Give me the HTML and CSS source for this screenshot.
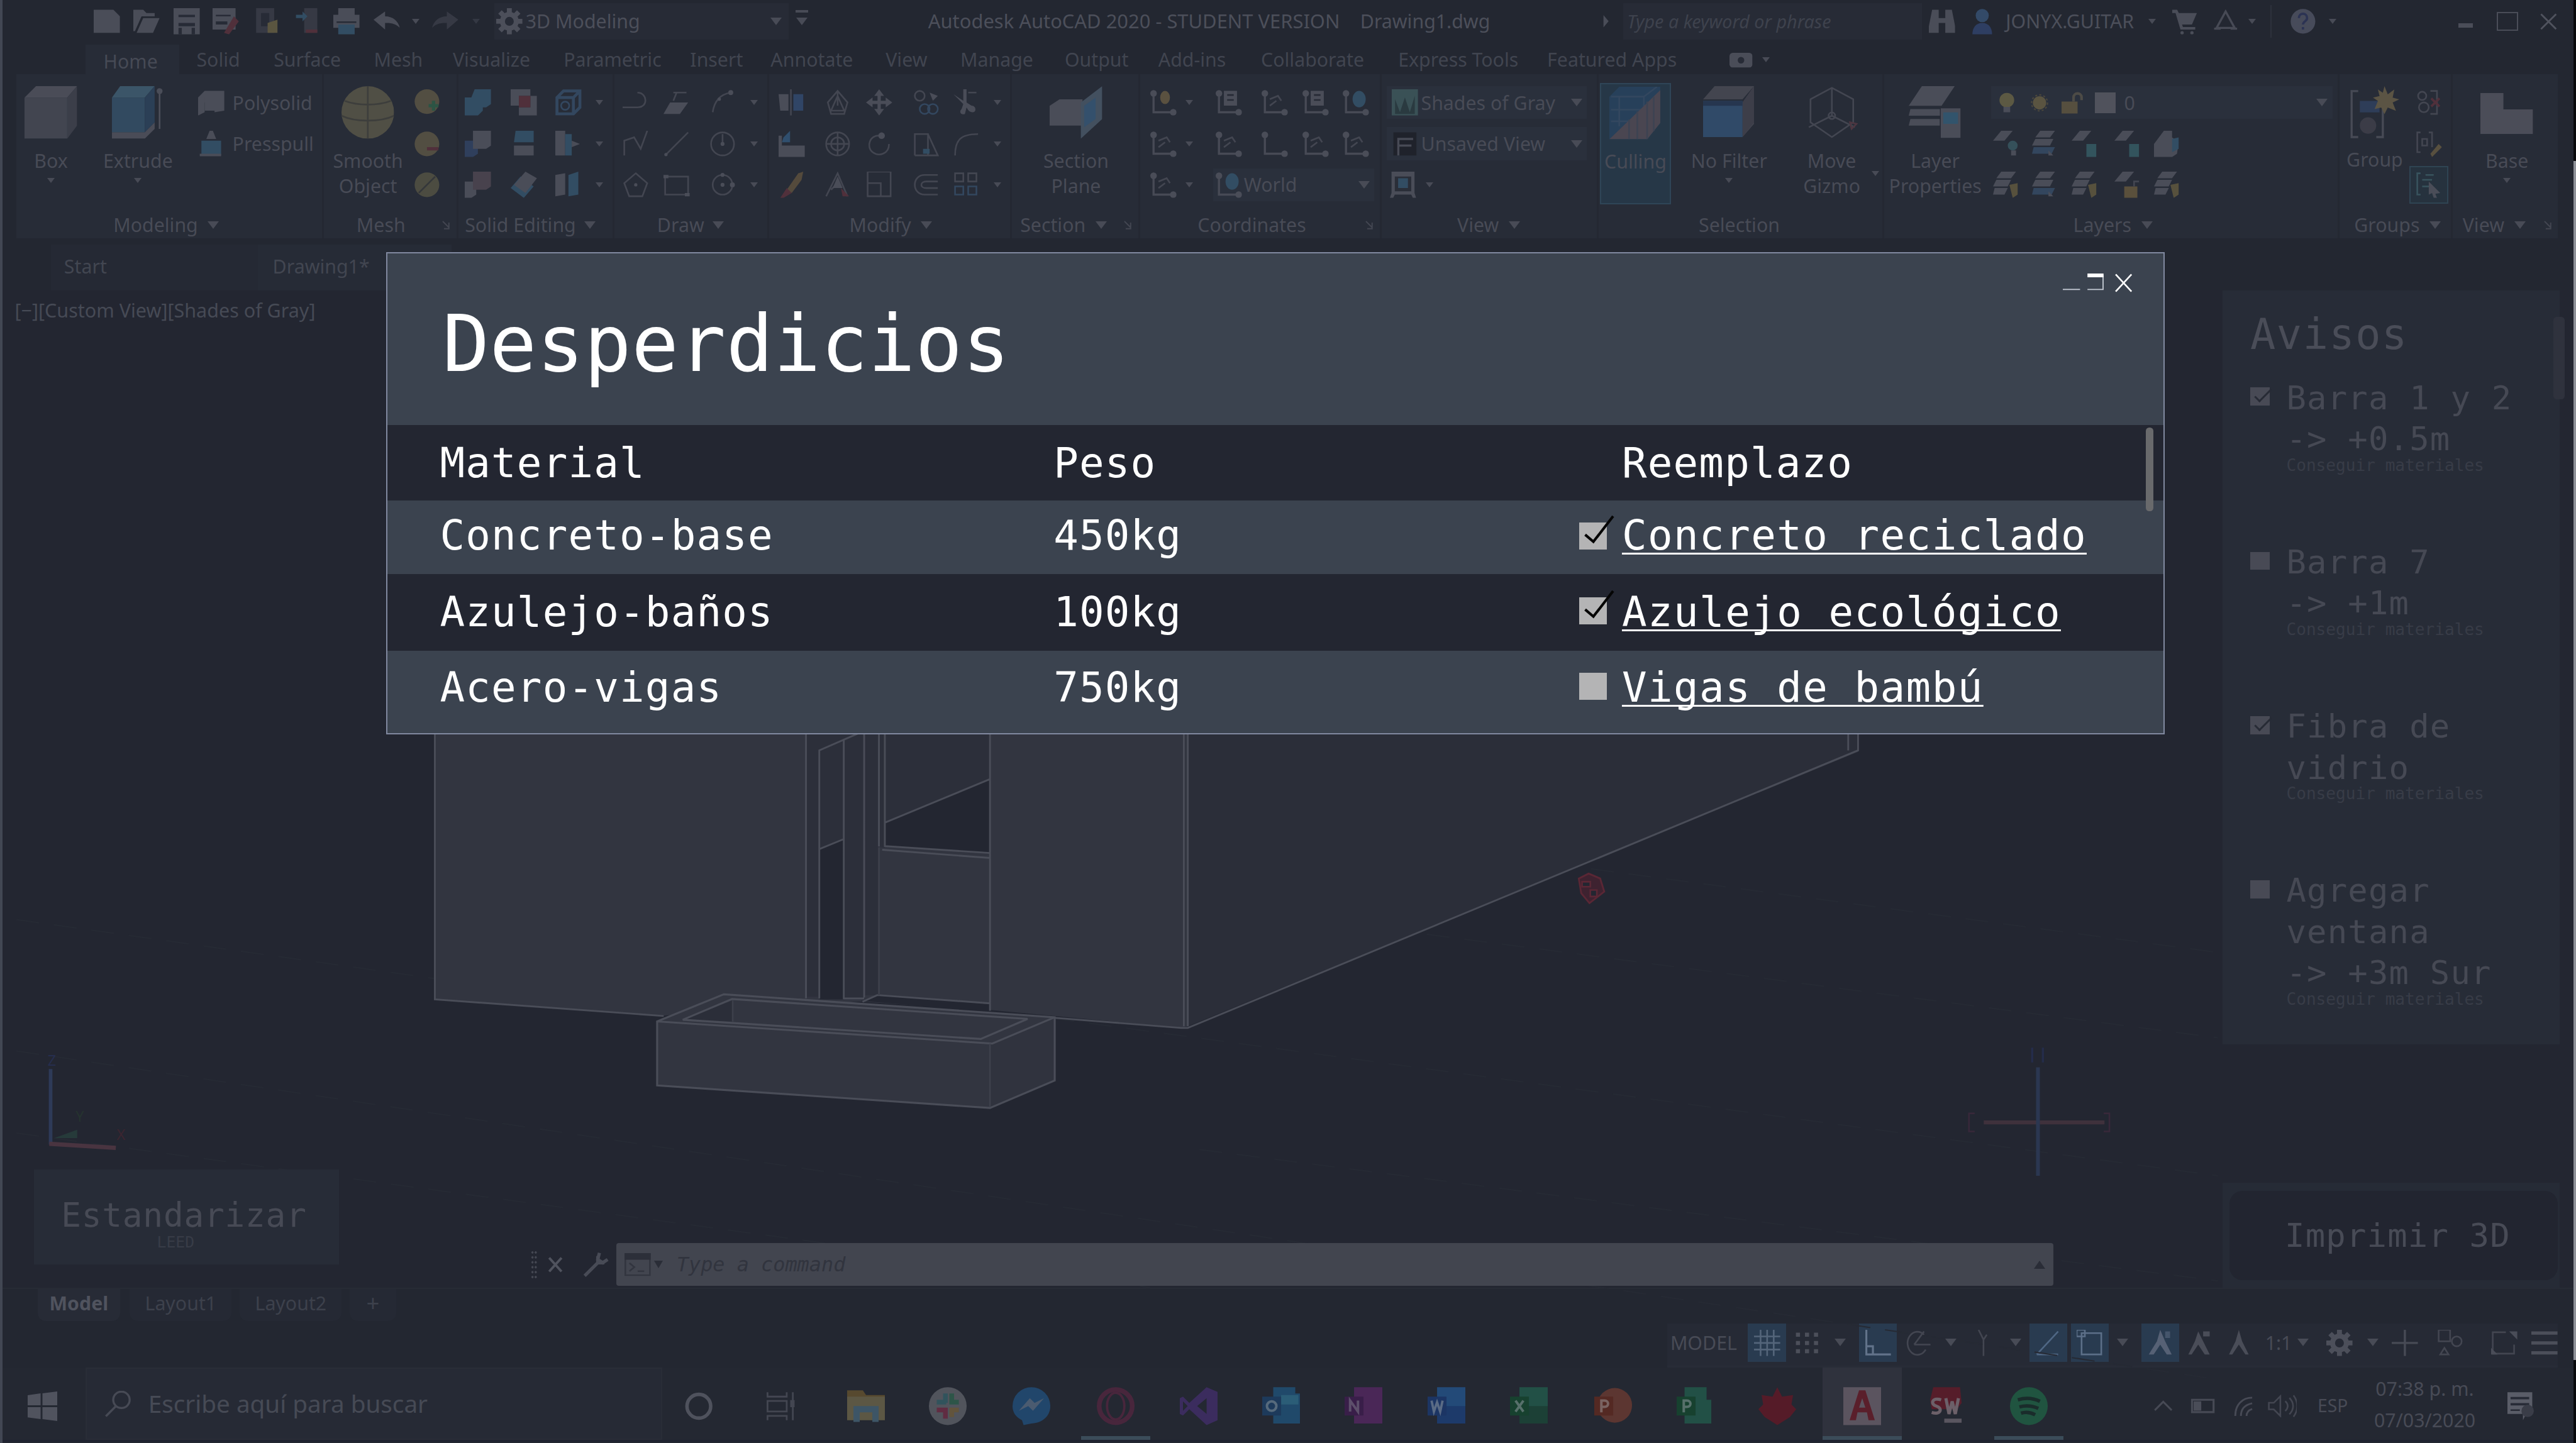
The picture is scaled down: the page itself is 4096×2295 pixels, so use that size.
FILE: index.html
```html
<!DOCTYPE html>
<html lang="es">
<head>
<meta charset="utf-8">
<title>Desperdicios</title>
<link rel="stylesheet" href="styles.css">
</head>
<body>
<svg class="sprite" aria-hidden="true">
  <symbol id="new" viewBox="0 0 16 16"><path class="g" d="M0 1h12l4 4v10H0z"/></symbol>
  <symbol id="open" viewBox="0 0 16 16"><path class="g" d="M0 1h6l2 2h5v2H5L1 14H0zM6 6h10l-4 9H2z"/></symbol>
  <symbol id="save" viewBox="0 0 16 16"><path class="g" d="M0 0h16v16H0z"/><path class="k" d="M3 4h10v1.500H3zM3 9h10v2H3zM3 12h2v4H3zM11 12h2v4h-2z"/></symbol>
  <symbol id="saveas" viewBox="0 0 16 16"><path class="g" d="M0 0h14v13H0z"/><path class="k" d="M2 4h9v1H2zM2 8h7v2H2z"/><path class="r" d="M13 5l3 3-6 8-3-1z"/></symbol>
  <symbol id="webopen" viewBox="0 0 16 16"><path class="d" d="M2 0h11v15H2z"/><path class="k" d="M5 3h5v8H5z"/><path class="y" d="M9 9l6-2v8H9z"/></symbol>
  <symbol id="websave" viewBox="0 0 16 16"><path class="d" d="M6 0h8v15H6z"/><path class="b" d="M1 4h4V2l3 3-3 3V6H1z"/><path class="r" d="M7 13h7v2H7z"/></symbol>
  <symbol id="print" viewBox="0 0 16 16"><path class="g" d="M3 0h10v4h3v8H0V4h3z"/><path class="k" d="M2 8h12v1H2z"/><path class="b" d="M3 10h10v6H3z"/></symbol>
  <symbol id="undo" viewBox="0 0 16 16"><path class="g" d="M0 7l7-5v3c5 0 8 3 9 7-3-3-6-3-9-3v4z"/></symbol>
  <symbol id="redo" viewBox="0 0 16 16"><path class="d" d="M16 7L9 2v3C4 5 1 8 0 12c3-3 6-3 9-3v4z"/></symbol>
  <symbol id="gear" viewBox="0 0 16 16"><circle cx="8" cy="8" r="4.200" fill="none" stroke="#4c4f5a" stroke-width="3"/><path stroke="#4c4f5a" stroke-width="3" d="M8 0v3M8 13v3M0 8h3M13 8h3M2.300 2.300l2 2M11.700 11.700l2 2M2.300 13.700l2-2M11.700 4.300l2-2"/></symbol>
  <symbol id="binoc" viewBox="0 0 16 16"><path class="g" d="M2 1h4v5h4V1h4l2 10v4h-6V9H6v6H0v-4z"/></symbol>
  <symbol id="user" viewBox="0 0 16 16"><circle cx="8" cy="4.500" r="4" fill="#334a68"/><path d="M2 16c0-4 2-7 6-7s6 3 6 7z" fill="#2e3e62"/></symbol>
  <symbol id="cart" viewBox="0 0 16 16"><path class="g" d="M0 1h3l1 2h11l-3 7H6l.500 1.500H14V13H5L2 3H0z"/><circle class="g" cx="6" cy="15" r="1"/><circle class="g" cx="12" cy="15" r="1"/></symbol>
  <symbol id="atri" viewBox="0 0 16 16"><path class="ln2" d="M8 2l5.500 10h-11zM1 12.500h4M11 12.500h4"/></symbol>
  <symbol id="help" viewBox="0 0 16 16"><circle cx="8" cy="8" r="7.500" fill="#474b5a"/><path d="M5.500 6c0-3.500 5-3.500 5 0 0 2-2.500 2-2.500 4M8 11.500v1.500" fill="none" stroke="#2c3353" stroke-width="1.400"/></symbol>
  <symbol id="box" viewBox="0 0 32 32"><path fill="#424550" d="M0 7h26v25H0z"/><path fill="#4a4c57" d="M0 7l7-7h25l-6 7z"/><path fill="#3b3e49" d="M26 7l6-7v24l-6 8z"/></symbol>
  <symbol id="extrude" viewBox="0 0 32 32"><path fill="#4a4c57" d="M0 28h20l6-6v4l-6 6H0z"/><path fill="#324a60" d="M0 7h20v21H0z"/><path fill="#3b5568" d="M0 7l5-7h21l-6 7z"/><path fill="#2b3f56" d="M20 7l6-7v22l-6 6z"/><path stroke="#4c4f5a" d="M29 3v23" /><circle class="g" cx="29" cy="3" r="1.800"/></symbol>
  <symbol id="polysolid" viewBox="0 0 16 16"><path class="g" d="M0 5l4-4h12v12l-6 1V6L4 8v6l-4 2z"/><path class="g" d="M4 5h10v8H4z"/></symbol>
  <symbol id="presspull" viewBox="0 0 16 16"><path class="b" d="M2 6h12v9H2z"/><path class="g" d="M7 0h2l2 5H5zM1 14h13v1.500H1z"/></symbol>
  <symbol id="sphere" viewBox="0 0 32 32"><circle cx="16" cy="16" r="16" fill="#504f45"/><path fill="none" stroke="#3d3e3c" d="M16 0v32M0 18c8 4 24 4 32 0M2 9c8 3 20 3 28 0"/></symbol>
  <symbol id="sphm" viewBox="0 0 16 16"><circle cx="8" cy="7.500" r="7.500" fill="#524e42"/><path class="gr" d="M9 9h6v2h-6zM11 7h2v6h-2z"/></symbol>
  <symbol id="sphl" viewBox="0 0 16 16"><circle cx="8" cy="8" r="7.500" fill="#524e42"/><path class="r" d="M8 10h7v2H8z"/></symbol>
  <symbol id="sphs" viewBox="0 0 16 16"><circle cx="8" cy="8" r="7.500" fill="#4c4c41"/><path stroke="#34373a" d="M3 13L13 3"/></symbol>
  <symbol id="union" viewBox="0 0 16 16"><path class="b" d="M0 5h4l2-5h10v9l-3 2h-2v2l-3 3H0z"/></symbol>
  <symbol id="subtract" viewBox="0 0 16 16"><path class="g" d="M0 0h12v4H5v6H0zM5 11h7V4h4v12H5z"/><path class="r" d="M5 4h7v7H5z"/></symbol>
  <symbol id="wirebox" viewBox="0 0 16 16"><path class="lb wide" d="M1 5l4-4h10v10l-4 4H1zM1 5h10v10M11 5l4-4"/><circle class="lb" cx="6" cy="10" r="2.500"/></symbol>
  <symbol id="slab" viewBox="0 0 16 16"><path fill="#2f3f5c" d="M0 6h8v8l-3 2H0z"/><path class="g" d="M5 0h11v9l-3 2H5z"/></symbol>
  <symbol id="slice" viewBox="0 0 16 16"><path class="b" d="M3 0h11v7H2z"/><path class="g" d="M2 9h12v6H2z"/></symbol>
  <symbol id="thicken" viewBox="0 0 16 16"><path class="g" d="M0 0h6v15H0z"/><path class="b" d="M6 2h4v13H6z"/><path class="g" d="M10 6l5 2-5 2z"/></symbol>
  <symbol id="inter" viewBox="0 0 16 16"><path class="g" d="M0 6h7v8l-3 2H0z"/><path fill="#48424d" d="M5 0h11v9l-3 2H5z"/></symbol>
  <symbol id="fillet" viewBox="0 0 16 16"><path class="b" d="M0 10l6-7 8 6-6 7z"/><path class="g" d="M2 8l7-8 7 4-7 9z"/></symbol>
  <symbol id="shell" viewBox="0 0 16 16"><path class="g" d="M0 2l6-1v13l-6 1z"/><path class="b" d="M8 2l6-2v14l-6 1z"/></symbol>
  <symbol id="pline" viewBox="0 0 16 16"><path class="ln" d="M0 11h9c7 0 6-9 0-9M0 11h3"/></symbol>
  <symbol id="plane" viewBox="0 0 16 16"><path class="g" d="M4 8h11l-5 7H0z"/><path class="ln" d="M6 2h8M8 2L6 7"/></symbol>
  <symbol id="arc" viewBox="0 0 16 16"><path class="ln" d="M2 14C3 7 7 3 13 2"/><circle class="g" cx="13" cy="2" r="1.500"/><circle class="g" cx="6" cy="6" r="1"/></symbol>
  <symbol id="zig" viewBox="0 0 16 16"><path class="ln" d="M1 15V6l6-2 4 7 4-11"/></symbol>
  <symbol id="line" viewBox="0 0 16 16"><path class="ln" d="M1 15L15 1"/><circle class="g" cx="1.500" cy="14.500" r="1"/></symbol>
  <symbol id="circle" viewBox="0 0 16 16"><circle class="ln" cx="8" cy="8" r="7"/><path class="ln" d="M8 8V2"/><circle class="g" cx="8" cy="8" r="1.200"/></symbol>
  <symbol id="penta" viewBox="0 0 16 16"><path class="ln" d="M8 1l7 6-3 8H4L1 7z"/><circle class="g" cx="8" cy="8" r="1"/></symbol>
  <symbol id="rect" viewBox="0 0 16 16"><path class="ln" d="M1 3h14v11H1z"/><path class="g" d="M0 2h3v2H0zM13 13h3v2h-3z"/></symbol>
  <symbol id="helix" viewBox="0 0 16 16"><circle class="ln" cx="8" cy="8" r="6"/><circle class="g" cx="8" cy="8" r="1.200"/><circle class="g" cx="14" cy="8" r="1.500"/><circle class="g" cx="8" cy="2" r="1.200"/></symbol>
  <symbol id="mirror" viewBox="0 0 16 16"><path class="g" d="M0 3h6v10H1z"/><path fill="#304566" d="M9 3h6v10H9z"/><path class="ln" d="M7.500 0v16"/></symbol>
  <symbol id="rot3" viewBox="0 0 16 16"><path class="ln" d="M8 1l6 7-2 7H4L2 8zM8 4l4 9H4zM8 1v9"/></symbol>
  <symbol id="move" viewBox="0 0 16 16"><path class="g" d="M8 0l3 4H9v3h3V5l4 3-4 3V9H9v3h2l-3 4-3-4h2V9H4v2L0 8l4-3v2h3V4H5z"/></symbol>
  <symbol id="copy" viewBox="0 0 16 16"><circle class="ln" cx="4" cy="4" r="3"/><path class="g" d="M10 2l5 2-3 3z"/><circle class="lb" cx="7" cy="12" r="3"/><circle class="lb" cx="12" cy="12" r="3"/></symbol>
  <symbol id="trim" viewBox="0 0 16 16"><path class="g" d="M0 3l6 4V0h2v8l3 2c3 0 3 4 1 4s-3-1-4-3l-1 4c-2 1-4-1-2-3l1-3z"/><path class="ln" d="M9 2h5"/></symbol>
  <symbol id="align" viewBox="0 0 16 16"><path class="g" d="M0 3h2v6h14v7H0z"/><path fill="#304f6e" d="M3 4l4-4v7H2z"/></symbol>
  <symbol id="rot" viewBox="0 0 16 16"><circle class="ln" cx="8" cy="8" r="7"/><circle class="ln" cx="8" cy="8" r="4"/><path class="ln" d="M8 1v14M1 8h14"/></symbol>
  <symbol id="rotate" viewBox="0 0 16 16"><path class="ln" d="M9 3C2 2 0 10 4 13s10 1 10-5"/><circle class="g" cx="9.500" cy="3" r="2"/></symbol>
  <symbol id="stretch" viewBox="0 0 16 16"><path class="ln" d="M1 15V2h8v13M9 2l6 13H1"/><path class="b" d="M6 11h4v3H6z"/></symbol>
  <symbol id="filletc" viewBox="0 0 16 16"><path class="ln" d="M1 15C1 6 4 2 15 2"/></symbol>
  <symbol id="erase" viewBox="0 0 16 16"><path fill="#544a3c" d="M12 1l3-1-1 5-6 8-3-2z"/><path class="r" d="M5 10l3 3-5 3H1z"/></symbol>
  <symbol id="scale3" viewBox="0 0 16 16"><path class="ln" d="M1 15L8 1l6 14M4 11l4-4"/><path class="r" d="M10 10l5 5h-4z"/><path class="g" d="M8 3l3 7H5z"/></symbol>
  <symbol id="scale" viewBox="0 0 16 16"><path class="ln" d="M1 0v15h14V0zM1 7h8v8"/></symbol>
  <symbol id="offset" viewBox="0 0 16 16"><path class="ln" d="M15 2H7C-1 2-1 14 7 14h8M15 6H8c-4 0-4 4 0 4h7"/></symbol>
  <symbol id="array" viewBox="0 0 16 16"><path class="ln" d="M1 1h5v5H1zM9 1h5v5H9z"/><path class="lb" d="M1 9h5v5H1zM9 9h5v5H9z"/></symbol>
  <symbol id="section" viewBox="0 0 32 32"><path class="g" d="M0 12l6-4h14v16H0z"/><path fill="#43505f" d="M19 10L32 0v20L19 32z"/><path fill="#34506c" d="M21 12l7-5v13l-7 5z"/></symbol>
  <symbol id="ucs" viewBox="0 0 16 16"><path class="ln2" d="M2 3v11h11"/><circle class="g" cx="2" cy="2.500" r="2"/><circle class="g" cx="14" cy="14" r="2"/></symbol>
  <symbol id="ucs1" viewBox="0 0 16 16"><path class="ln2" d="M2 3v11h11"/><circle class="g" cx="2" cy="2.500" r="2"/><circle class="g" cx="14" cy="14" r="2"/><ellipse cx="9" cy="5" rx="3" ry="4" fill="#5a5140"/></symbol>
  <symbol id="ucs2" viewBox="0 0 16 16"><path class="ln2" d="M2 3v11h11"/><circle class="g" cx="2" cy="2.500" r="2"/><circle class="g" cx="14" cy="14" r="2"/><path class="g" d="M5 1h8v9H5z"/><path class="k" d="M7 3h4v1H7zM7 6h4v1H7z"/></symbol>
  <symbol id="ucs3" viewBox="0 0 16 16"><path class="ln2" d="M2 3v11h11"/><circle class="g" cx="2" cy="2.500" r="2"/><circle class="g" cx="14" cy="14" r="2"/><ellipse class="b" cx="10" cy="6" rx="4" ry="5"/></symbol>
  <symbol id="ucs4" viewBox="0 0 16 16"><path class="ln2" d="M2 3v11h11"/><path class="ln" d="M5 6l5-2 2 3M5 10l4-3"/><circle class="g" cx="2" cy="2.500" r="2"/><circle class="g" cx="14" cy="14" r="2"/></symbol>
  <symbol id="vs" viewBox="0 0 16 16"><path fill="#3a5156" d="M0 0h16v16H0z"/><path fill="#2a3a40" d="M2 6l3 8 3-9 3 9 3-10v11H2z"/></symbol>
  <symbol id="uv" viewBox="0 0 16 16"><path fill="#1f222b" d="M1 1h14v14H1z"/><path class="ln2" d="M4 15V5h9M4 9h8"/></symbol>
  <symbol id="vp" viewBox="0 0 16 16"><path class="g" d="M1 0h14v13l1 3h-2l-1-2H3l-1 2H0l1-3z"/><path fill="#2a2e38" d="M3 3h10v9H3z"/><path class="b" d="M5 4h6v6H5z"/></symbol>
  <symbol id="culling" viewBox="0 0 32 32"><path fill="#27405a" d="M0 6l6-6h25v22l-8 10H0z"/><path class="lb" d="M1 6h20v24M21 6l8-6M6 6v18M1 14h20M1 21h12"/><path fill="#4a4651" d="M0 32L31 2v20l-8 10z"/><path stroke="#3d4352" fill="none" d="M12 20v12M17 15v17M23 9v23M27 6v21"/></symbol>
  <symbol id="nofilter" viewBox="0 0 32 32"><path fill="#43454f" d="M0 8l7-8h24l-7 10v21l7-8V0l-7 8z"/><path fill="#3d3e49" d="M24 10l7-10v22l-7 9z"/><path fill="#304a68" d="M0 9h24v22H0z"/><path fill="#26364f" d="M0 9h24v3H0z"/></symbol>
  <symbol id="gizmo" viewBox="0 0 32 32"><path class="ln" d="M16 1v17M3 8v14l13 9 13-9V8L16 1zM16 18L2 25M16 18l14 7"/><circle class="ln" cx="16" cy="18" r="2"/><path stroke="#4d3640" fill="none" d="M27 22l4 1-3 3z"/></symbol>
  <symbol id="layers" viewBox="0 0 32 32"><path class="g" d="M8 0h20L20 12H0zM1 14h26l-3 4H0zM1 20h18v4H0z"/><path class="k" d="M19 13h13v19H19z"/><path class="g" d="M19.500 13.500h12v18h-12z"/><path fill="#32546c" d="M21 16h9v7h-9z"/></symbol>
  <symbol id="bulb" viewBox="0 0 16 16"><circle cx="8" cy="6" r="5.500" fill="#5c5943"/><path class="g" d="M5.500 11h5v4h-5z"/></symbol>
  <symbol id="sun" viewBox="0 0 16 16"><circle cx="8" cy="8" r="5" fill="#5a5441"/><circle cx="8" cy="8" r="6" fill="none" stroke="#4b473d" stroke-dasharray="1.500 1.600"/></symbol>
  <symbol id="lock" viewBox="0 0 16 16"><path fill="#564f3f" d="M0 7h12v9H0z"/><path fill="none" stroke="#4d4b46" stroke-width="2" d="M9 7V4c0-4 6-4 6 0v2"/></symbol>
  <symbol id="lay1" viewBox="0 0 16 16"><path class="g" d="M5 0h7L7 6H0z"/><circle cx="12" cy="9" r="3" fill="#35505a"/><path class="g" d="M11 12h3v3h-3z"/></symbol>
  <symbol id="lay2" viewBox="0 0 16 16"><path class="g" d="M5 0h9l-3 4H2zM2 5h11l-2 4H0z"/><path fill="#33465e" d="M1 10h13l-2 4H0z"/><path class="g" d="M10 12l3 3h-3z"/></symbol>
  <symbol id="lay3" viewBox="0 0 16 16"><path class="g" d="M5 0h7L7 6H0z"/><path fill="#33545d" d="M9 8h6v8H9z"/></symbol>
  <symbol id="lay4" viewBox="0 0 16 16"><path class="g" d="M6 0h5v4l4 3-1 7-3 2H0V8z"/><path class="b" d="M11 5l4-1v7l-4 2z"/></symbol>
  <symbol id="lay5" viewBox="0 0 16 16"><path class="g" d="M5 0h9l-3 4H2zM2 5h9l-2 4H0zM1 10h8l-2 4H0z"/><path fill="#57513d" d="M10 8l5-1v7l-3 2z"/></symbol>
  <symbol id="lay6" viewBox="0 0 16 16"><path class="g" d="M5 0h7L7 6H0z"/><path fill="#5a503c" d="M6 9h8v7H6z"/><path class="ln" d="M12 9V6h3"/></symbol>
  <symbol id="group" viewBox="0 0 32 32"><path class="ln2" d="M6 3H2v28h4M17 31h4V14"/><path fill="#2e3d58" d="M7 9h12v7H7z"/><circle cx="12" cy="24" r="5" fill="#3b3c47"/><path fill="#5b5444" d="M22 0l2 5 4-3-1 5 4 1-4 2 2 5-5-2-2 4-2-4-4 1 2-5-3-2 4-1-1-4 3 2z"/></symbol>
  <symbol id="ungroup" viewBox="0 0 16 16"><circle class="ln" cx="4" cy="4" r="2.500"/><circle class="ln" cx="5" cy="11" r="3"/><path class="ln" d="M9 1h4v14H9"/><path class="r" d="M10 5l5 5-1 1-5-5zM14 5l1 1-5 5-1-1z"/></symbol>
  <symbol id="gedit" viewBox="0 0 16 16"><path class="ln" d="M3 1H1v12h2M8 1h2v9M4 5h3v4H4z"/><path fill="#58503f" d="M14 8l2 2-6 6-1-2z"/></symbol>
  <symbol id="gsel" viewBox="0 0 16 16"><path fill="none" stroke="#38535d" d="M3 1H1v13h2M6 2h5M4 5h6M4 9h5"/><path class="g" d="M8 6l7 7-3 .500 1 2.500h-2l-1-3-2 1z"/></symbol>
  <symbol id="base" viewBox="0 0 32 25"><path fill="#4b4d58" d="M0 0h14v10h18v15H0z"/></symbol>
  <symbol id="dlg" viewBox="0 0 8 8"><path class="ln" d="M1 1l5 5M6 2v5H2"/></symbol>
  <symbol id="play" viewBox="0 0 8 12"><path class="g" d="M1 0l5 6-5 6z"/></symbol>
  <symbol id="rec" viewBox="0 0 14 9"><rect class="g" width="14" height="9" rx="2"/><circle class="k" cx="7" cy="4.500" r="2"/></symbol>
  <symbol id="wrench" viewBox="0 0 16 16"><path d="M1 15l8-8M9 7V3M9 7h4M9 6l2 1" stroke="#484b56" stroke-width="2" fill="none"/><path d="M10 1L9 5l3 2 3-2" stroke="#484b56" stroke-width="2" fill="none"/></symbol>
  <symbol id="term" viewBox="0 0 16 14"><path fill="none" stroke="#32353f" d="M.500.500h15v13H.500z"/><path fill="#2c2f39" d="M0 0h16v4H0z"/><path fill="none" stroke="#32353f" d="M3 6l3 2.500L3 11M8 11h4"/></symbol>
  <symbol id="win" viewBox="0 0 16 16"><path fill="#50535e" d="M0 2l7-1v6.500H0zM8 1l8-1v7.500H8zM0 8.500h7V15l-7-1zM8 8.500h8V16l-8-1z"/></symbol>
  <symbol id="search" viewBox="0 0 16 16"><circle class="ln2" cx="10" cy="5.500" r="5"/><path class="ln2" d="M6.500 9.500L.500 15.500"/></symbol>
  <symbol id="cortana" viewBox="0 0 16 16"><circle cx="8" cy="8" r="6.800" fill="none" stroke="#4f525d" stroke-width="2"/></symbol>
  <symbol id="taskview" viewBox="0 0 16 16"><path class="ln" d="M.500 0v2.500h11V0M.500 5h11v6H.500zM.500 16v-2.500h11V16M15 0v16M14 5h2v3h-2z"/></symbol>
  <symbol id="folder" viewBox="0 0 24 24"><path fill="#57492f" d="M0 2h10l2 3h12v15H0z"/><path fill="#5c5744" d="M0 6h24v15H0z"/><path fill="#3d5566" d="M4 12h16v10h-4v-6H8v6H4z"/></symbol>
  <symbol id="slack" viewBox="0 0 24 24"><circle cx="12" cy="12" r="12" fill="#51545c"/><path fill="#31535c" d="M5 8h6v3H5zM9 4h3v6H9z"/><path fill="#2d5548" d="M13 4h3v7h-3zM15 8h4v3h-4z"/><path fill="#602c42" d="M9 13h3v7H9zM5 13h6v3H5z"/><path fill="#62543c" d="M13 13h6v3h-6zM13 13h3v6h-3z"/></symbol>
  <symbol id="messenger" viewBox="0 0 24 24"><path fill="#21466b" d="M12 0a12 12 0 0112 12c0 7-6 11-12 11l-5 1-1-3C2 19 0 16 0 12A12 12 0 0112 0z"/><path fill="#4b5b70" d="M4 15l7-8 3 3 6-3-7 8-3-3z"/></symbol>
  <symbol id="opera" viewBox="0 0 24 24"><ellipse cx="12" cy="12" rx="10.500" ry="10.500" fill="none" stroke="#48263c" stroke-width="3"/><ellipse cx="12" cy="12" rx="5.500" ry="8.500" fill="none" stroke="#48263c" stroke-width="1.500"/></symbol>
  <symbol id="vstudio" viewBox="0 0 24 24"><path fill="#3b2c5e" d="M17 0l7 3v18l-7 3L6 14l-4 4-2-1V7l2-1 4 4zM17 7l-6 5 6 5zM2 9v6l3-3z" fill-rule="evenodd"/></symbol>
  <symbol id="outlook" viewBox="0 0 24 24"><path fill="#20496a" d="M7 0h14v4h3v19H7z"/><path fill="#2b5d77" d="M12 5h11v6H12z"/><path fill="#1d3a5b" d="M0 6h12v12H0z"/><circle cx="6" cy="12" r="3" fill="none" stroke="#566a7c" stroke-width="1.600"/></symbol>
  <symbol id="onenote" viewBox="0 0 24 24"><path fill="#4a2757" d="M6 0h18v23H6z"/><path fill="#391e49" d="M0 6h12v12H0z"/><path fill="none" stroke="#5d4f6b" stroke-width="1.600" d="M3.500 15.500v-7l5 7v-7"/></symbol>
  <symbol id="word" viewBox="0 0 24 24"><path fill="#234a78" d="M6 0h18v23H6z"/><path fill="#1d3a6a" d="M6 12h18v11H6z"/><path fill="#1c3564" d="M0 6h12v12H0z"/><path fill="none" stroke="#5a6b85" stroke-width="1.500" d="M2.500 8.500l1.500 7 2-6 2 6 1.500-7"/></symbol>
  <symbol id="excel" viewBox="0 0 24 24"><path fill="#225046" d="M6 0h18v23H6z"/><path fill="#1c4036" d="M6 12h18v11H6z"/><path fill="#17412f" d="M0 6h12v12H0z"/><path stroke="#57706b" stroke-width="1.600" d="M3.500 8.500l5 7M8.500 8.500l-5 7"/></symbol>
  <symbol id="ppt" viewBox="0 0 24 24"><circle cx="13" cy="11.500" r="11" fill="#5c3631"/><path fill="#542923" d="M0 6h12v12H0z"/><path fill="none" stroke="#7a6361" stroke-width="1.600" d="M4.500 16V8.500h2c3 0 3 4 0 4h-2"/></symbol>
  <symbol id="project" viewBox="0 0 24 24"><path fill="#225046" d="M5 0h14v8h3v15H5z"/><path fill="#17412f" d="M0 6h12v12H0z"/><path fill="none" stroke="#57706b" stroke-width="1.600" d="M4.500 16V8.500h2c3 0 3 4 0 4h-2"/></symbol>
  <symbol id="redapp" viewBox="0 0 24 24"><path fill="#551b28" d="M12 0l3 6 7-1-1 6 3 3-4 5-8 5-8-5-4-5 3-3-1-6 7 1z"/></symbol>
  <symbol id="acad" viewBox="0 0 24 24"><path fill="#5b545f" d="M0 0h24v24H0z"/><path fill="#5a1f2b" fill-rule="evenodd" d="M10 2h4l6 19h-4l-1-5H9l-1 5H4zM12 7l-2 6h4z"/></symbol>
  <symbol id="sw" viewBox="0 0 24 24"><path fill="#561d2a" d="M4 0h17l1 10-3 4H3L2 8z"/><path fill="none" stroke="#6c6069" stroke-width="2" d="M9 8c-6-2-7 3-3 4s3 6-3 4M12 7l2 10 2-8 2 8 2-10"/><path fill="#5a5660" d="M11 20h11v2.500H11z"/></symbol>
  <symbol id="spotify" viewBox="0 0 24 24"><circle cx="12" cy="12" r="12" fill="#205440"/><path fill="none" stroke="#1a2c2b" stroke-width="2.200" d="M5 8c5-1.500 10-1 14 1M6 12.500c4-1 8-.800 12 1M7 16.500c3-1 6-.600 9 1"/></symbol>
  <symbol id="up" viewBox="0 0 14 8"><path class="ln2" d="M1 7l6-6 6 6"/></symbol>
  <symbol id="batt" viewBox="0 0 16 10"><path class="ln2" d="M1 1h14v8H1z"/><path class="g" d="M2 2h5v6H2z"/></symbol>
  <symbol id="wifi" viewBox="0 0 14 14"><path class="ln2" d="M1 14C1 6 6 1 13 1M5 14c0-5 3-8 8-9M9 14c0-2 1-4 4-5"/></symbol>
  <symbol id="vol" viewBox="0 0 18 14"><path class="ln" d="M1 5h3l4-4v12L4 9H1zM11 4c2 2 2 4 0 6M13.500 2c3 3 3 7 0 10M16 .500c3 4 3 9 0 13"/></symbol>
  <symbol id="notif" viewBox="0 0 18 18"><path fill="#5a5d68" d="M0 0h16v14h-4l-2 4v-4H0z"/><path class="k" d="M2 3h12v1.500H2zM2 7h12v1.500H2zM2 11h6v1H2z"/><circle cx="13" cy="12" r="4" fill="#3a3d48"/></symbol>
  <symbol id="sgrid" viewBox="0 0 16 16"><path stroke="#54657a" fill="none" d="M4 0v16M8 0v16M12 0v16M0 4h16M0 8h16M0 12h16"/></symbol>
  <symbol id="sdots" viewBox="0 0 16 16"><path stroke="#4c4f5a" fill="none" stroke-width="2.500" stroke-dasharray="2.500 3" d="M1 3h14M1 8h14M1 13h14"/></symbol>
  <symbol id="sortho" viewBox="0 0 16 16"><path stroke="#62738a" fill="none" stroke-width="1.200" d="M1 0v15h15M1 10h4v5"/></symbol>
  <symbol id="spolar" viewBox="0 0 16 16"><path class="ln" d="M12 3A6 7 0 1013 12M6 9h10M6 9l6-8"/></symbol>
  <symbol id="siso" viewBox="0 0 16 16"><path class="ln" d="M5 0l3 6v10M8 6l2-3"/></symbol>
  <symbol id="sangle" viewBox="0 0 16 16"><path stroke="#4f6784" fill="none" d="M1 15L14 1M1 15h13"/></symbol>
  <symbol id="ssnap" viewBox="0 0 16 16"><path stroke="#5c6f88" fill="none" d="M3 2h12v13H3zM0 0h5v4H0z"/></symbol>
  <symbol id="sann" viewBox="0 0 16 16"><path d="M8 0l3 7 4 8h-3L8 9l-4 6H1l5-8z" fill="#566175"/><path d="M11 1h3v4h-3z" fill="#45556b"/></symbol>
  <symbol id="sann2" viewBox="0 0 16 16"><path class="g" d="M7 1l3 6 4 8h-3L7 9l-4 6H1l4-8z"/><path class="g" d="M10 1h4v3h-4z"/></symbol>
  <symbol id="sann3" viewBox="0 0 16 16"><path class="g" d="M8 0l2 7 4 8h-2L8 9l-4 6H2l4-8z"/></symbol>
  <symbol id="splus" viewBox="0 0 16 16"><path class="ln2" d="M8 0v16M0 8h16"/></symbol>
  <symbol id="sobj" viewBox="0 0 16 16"><path class="ln" d="M1 0h7v7H1zM7 15H2l2.500-4z"/><circle class="ln" cx="12" cy="7" r="3"/></symbol>
  <symbol id="sfull" viewBox="0 0 16 14"><path class="ln" d="M9 .500H1v13h13V8"/><path class="g" d="M11 0h5v5zM0 14v-4l4 4z"/></symbol>
  <symbol id="smenu" viewBox="0 0 16 16"><path stroke="#4c4f5a" stroke-width="2" d="M0 2h16M0 8h16M0 14h16"/></symbol>
</svg>

<div class="app">
  <header class="titlebar">
    <i></i>
    <svg class="ic"><use href="#new"/></svg><svg class="ic"><use href="#open"/></svg><svg class="ic"><use href="#save"/></svg><svg class="ic"><use href="#saveas"/></svg><svg class="ic"><use href="#webopen"/></svg><svg class="ic"><use href="#websave"/></svg><svg class="ic"><use href="#print"/></svg><svg class="ic"><use href="#undo"/></svg><i class="dd sm"></i><svg class="ic"><use href="#redo"/></svg><i class="dd sm dim"></i>
    <i></i>
    <div class="workspace"><svg class="ic gear"><use href="#gear"/></svg><span>3D Modeling</span><i class="dd"></i></div>
    <i class="dd over"></i>
    <i></i>
    <span class="left caption">Autodesk AutoCAD 2020 - STUDENT VERSION</span>
    <span class="left">Drawing1.dwg</span>
    <svg class="play"><use href="#play"/></svg>
    <div class="find">Type a keyword or phrase</div>
    <svg class="ic"><use href="#binoc"/></svg><svg class="ic user"><use href="#user"/></svg>
    <span class="left who">JONYX.GUITAR</span><i class="dd sm"></i>
    <svg class="ic"><use href="#cart"/></svg><svg class="ic"><use href="#atri"/></svg><i class="dd sm"></i><i class="sep"></i>
    <svg class="ic"><use href="#help"/></svg><i class="dd sm"></i><i></i>
    <i class="wmin"></i><i class="wmax"></i><svg class="wx" viewBox="0 0 12 12"><path d="M1 1l10 10M11 1L1 11"/></svg>
  </header>
  <nav class="tabs">
    <span class="home">Home</span><span>Solid</span><span>Surface</span><span>Mesh</span><span>Visualize</span><span>Parametric</span><span>Insert</span><span>Annotate</span><span>View</span><span>Manage</span><span>Output</span><span>Add-ins</span><span>Collaborate</span><span>Express Tools</span><span>Featured Apps</span><svg class="rec"><use href="#rec"/></svg><i class="dd sm"></i>
  </nav>

  <section class="ribbon">
    <div class="panel modeling">
      <div class="tools">
        <div class="big c1"><svg><use href="#box"/></svg><span>Box</span><i class="dd sm"></i></div>
        <div class="big c2"><svg><use href="#extrude"/></svg><span>Extrude</span><i class="dd sm"></i></div>
        <svg class="ic"><use href="#polysolid"/></svg><span class="left">Polysolid</span>
        <svg class="ic"><use href="#presspull"/></svg><span class="left">Presspull</span>
      </div>
      <div class="name">Modeling<i class="dd"></i></div>
    </div>
    <div class="panel mesh">
      <div class="tools">
        <div class="big c1"><svg><use href="#sphere"/></svg><span>Smooth</span><span>Object</span></div>
        <svg class="ic"><use href="#sphm"/></svg><svg class="ic"><use href="#sphl"/></svg><svg class="ic"><use href="#sphs"/></svg>
      </div>
      <div class="name">Mesh<svg class="dlg"><use href="#dlg"/></svg></div>
    </div>
    <div class="panel solid">
      <div class="tools">
        <svg class="ic"><use href="#union"/></svg><svg class="ic"><use href="#subtract"/></svg><svg class="ic"><use href="#wirebox"/></svg><i class="dd sm"></i>
        <svg class="ic"><use href="#slab"/></svg><svg class="ic"><use href="#slice"/></svg><svg class="ic"><use href="#thicken"/></svg><i class="dd sm"></i>
        <svg class="ic"><use href="#inter"/></svg><svg class="ic"><use href="#fillet"/></svg><svg class="ic"><use href="#shell"/></svg><i class="dd sm"></i>
      </div>
      <div class="name">Solid Editing<i class="dd"></i></div>
    </div>
    <div class="panel draw">
      <div class="tools">
        <svg class="ic"><use href="#pline"/></svg><svg class="ic"><use href="#plane"/></svg><svg class="ic"><use href="#arc"/></svg><i class="dd sm"></i>
        <svg class="ic"><use href="#zig"/></svg><svg class="ic"><use href="#line"/></svg><svg class="ic"><use href="#circle"/></svg><i class="dd sm"></i>
        <svg class="ic"><use href="#penta"/></svg><svg class="ic"><use href="#rect"/></svg><svg class="ic"><use href="#helix"/></svg><i class="dd sm"></i>
      </div>
      <div class="name">Draw<i class="dd"></i></div>
    </div>
    <div class="panel modify">
      <div class="tools">
        <svg class="ic"><use href="#mirror"/></svg><svg class="ic"><use href="#rot3"/></svg><svg class="ic"><use href="#move"/></svg><svg class="ic"><use href="#copy"/></svg><svg class="ic"><use href="#trim"/></svg><i class="dd sm"></i>
        <svg class="ic"><use href="#align"/></svg><svg class="ic"><use href="#rot"/></svg><svg class="ic"><use href="#rotate"/></svg><svg class="ic"><use href="#stretch"/></svg><svg class="ic"><use href="#filletc"/></svg><i class="dd sm"></i>
        <svg class="ic"><use href="#erase"/></svg><svg class="ic"><use href="#scale3"/></svg><svg class="ic"><use href="#scale"/></svg><svg class="ic"><use href="#offset"/></svg><svg class="ic"><use href="#array"/></svg><i class="dd sm"></i>
      </div>
      <div class="name">Modify<i class="dd"></i></div>
    </div>
    <div class="panel sect">
      <div class="tools">
        <div class="big c1"><svg><use href="#section"/></svg><span>Section</span><span>Plane</span></div>
      </div>
      <div class="name">Section<i class="dd"></i><svg class="dlg"><use href="#dlg"/></svg></div>
    </div>
    <div class="panel coord">
      <div class="tools">
        <svg class="ic"><use href="#ucs1"/></svg><i class="dd sm"></i><svg class="ic"><use href="#ucs2"/></svg><svg class="ic"><use href="#ucs4"/></svg><svg class="ic"><use href="#ucs2"/></svg><svg class="ic"><use href="#ucs3"/></svg>
        <svg class="ic"><use href="#ucs4"/></svg><i class="dd sm"></i><svg class="ic"><use href="#ucs4"/></svg><svg class="ic"><use href="#ucs"/></svg><svg class="ic"><use href="#ucs4"/></svg><svg class="ic"><use href="#ucs4"/></svg>
        <svg class="ic"><use href="#ucs4"/></svg><i class="dd sm"></i>
        <div class="combo world"><svg class="ic"><use href="#ucs3"/></svg><span>World</span><i class="dd"></i></div>
      </div>
      <div class="name">Coordinates<svg class="dlg"><use href="#dlg"/></svg></div>
    </div>
    <div class="panel view">
      <div class="tools">
        <div class="combo"><svg class="ic"><use href="#vs"/></svg><span>Shades of Gray</span><i class="dd"></i></div>
        <div class="combo"><svg class="ic"><use href="#uv"/></svg><span>Unsaved View</span><i class="dd"></i></div>
        <div class="vp"><svg class="ic"><use href="#vp"/></svg><i class="dd sm"></i></div>
      </div>
      <div class="name">View<i class="dd"></i></div>
    </div>
    <div class="panel select">
      <div class="tools">
        <div class="big c1 on"><svg><use href="#culling"/></svg><span>Culling</span></div>
        <div class="big c2"><svg><use href="#nofilter"/></svg><span>No Filter</span><i class="dd sm"></i></div>
        <div class="big c3"><svg><use href="#gizmo"/></svg><span>Move</span><span>Gizmo</span></div>
        <i class="dd sm c4"></i>
      </div>
      <div class="name">Selection</div>
    </div>
    <div class="panel layer">
      <div class="tools">
        <div class="big c1"><svg><use href="#layers"/></svg><span>Layer</span><span>Properties</span></div>
        <div class="combo cur"><svg class="ic"><use href="#bulb"/></svg><svg class="ic"><use href="#sun"/></svg><svg class="ic"><use href="#lock"/></svg><b></b><span>0</span><i class="dd"></i></div>
        <svg class="ic"><use href="#lay1"/></svg><svg class="ic"><use href="#lay2"/></svg><svg class="ic"><use href="#lay3"/></svg><svg class="ic"><use href="#lay3"/></svg><svg class="ic"><use href="#lay4"/></svg>
        <svg class="ic"><use href="#lay5"/></svg><svg class="ic"><use href="#lay2"/></svg><svg class="ic"><use href="#lay5"/></svg><svg class="ic"><use href="#lay6"/></svg><svg class="ic"><use href="#lay5"/></svg>
      </div>
      <div class="name">Layers<i class="dd"></i></div>
    </div>
    <div class="panel groups">
      <div class="tools">
        <div class="big c1"><svg><use href="#group"/></svg><span>Group</span></div>
        <svg class="ic"><use href="#ungroup"/></svg><svg class="ic"><use href="#gedit"/></svg><div class="toggle"><svg class="ic"><use href="#gsel"/></svg></div>
      </div>
      <div class="name">Groups<i class="dd"></i></div>
    </div>
    <div class="panel baseview">
      <div class="tools">
        <div class="big c1"><svg><use href="#base"/></svg><span>Base</span><i class="dd sm"></i></div>
      </div>
      <div class="name">View<i class="dd"></i><svg class="dlg"><use href="#dlg"/></svg></div>
    </div>
  </section>

  <nav class="docs"><span class="start">Start</span><span class="drawing">Drawing1*</span></nav>

  <main class="work">
    <div class="canvas">
      <p class="viewlabel">[−][Custom View][Shades of Gray]</p>
      <svg class="scene" viewBox="0 177 1352.700 607">
        <g stroke="#262a34" stroke-width=".8" fill="none" stroke-dasharray="14 9">
          <path d="M10 640L1350 840M10 690L700 784M640 620L1350 716M800 560L1350 632M730 700L1350 780M900 520L1350 580M10 560L265 596"/>
        </g>
        <path fill="#2b2e39" d="M723 440H1131V458L723 625z"/>
        <path fill="#323540" d="M264.700 440H723V625L719 626 602.600 615 523 610 404 618.500 264.700 608.600z"/>
        <path fill="#2c2f3a" d="M490.600 440H602.600V519L538.600 515.500V606H490.600z"/>
        <path fill="#2d303b" d="M513.600 440h12.400v167h-12.400z"/>
        <path fill="#323540" d="M535 516l67.600 4.500V611L535 606z"/>
        <path fill="#232631" d="M538.600 501L602.600 474.500V519L538.600 515.300zM499 517l14.600-6V608.600H499zM524 609.500L534 606 602.600 611.500V616z"/>
        <path fill="#2c2f3a" d="M491 440h33v7l-25 10v150h-8zM499 457l14.600-6v60l-14.600 6zM513.600 452l12.400-6v162h-12.400z"/>
        <g stroke="#4a4d58" stroke-width="1.100" fill="none">
          <path d="M264.700 440V608.600L404 618.700M490.600 440V608M498.700 608V457L524 446M513.600 450V608H526M526 440V607.500M535 440V515.500M538.600 440V515.300L602.600 519.500M538.600 501L602.600 474.500M499 517L513.600 511M602.600 440V615.500M537 517.500L602.600 522.500M525 610L534 606 602.600 611M640 619.700L719 626H723L1131 457V440M1125 440V457M720.600 440V625M723 440V625"/>
          <path d="M535 516V606" stroke="#3c3f4a"/>
        </g>
        <path fill="#323540" d="M400 622L440.600 605.500 642 619.500V658L602.600 674.700 400 661z"/>
        <path fill="#2b2e39" d="M415.600 621L445.600 609.400V622z"/>
        <path fill="#30333e" d="M602.600 635.500L642 619.500V658L602.600 674.700z"/>
        <g stroke="#4a4d58" stroke-width="1.200" fill="none">
          <path d="M400 622L440.600 605.500 642 619.500V658L602.600 674.700 400 661zM400 622L604 635.500 642 619.500"/>
          <path d="M415.600 621L445.600 608.400 625.500 620.500 597 632.700z"/>
        </g>
        <path d="M446 609.400V622M602.600 635.500V674" stroke="#3d404b"/>
        <path fill="#3e2230" stroke="#5a2735" stroke-width="1.100" d="M961 535l6-3 7 3 2.500 8-9 7-5-6z"/><path fill="#232631" stroke="#5a2735" d="M963 537h5v3h-5zM968 542h4v4h-4z"/>
        <path stroke="#2e3a58" stroke-width="2.200" d="M30.800 651V697"/><path stroke="#493440" stroke-width="2.600" d="M30 696.500L70.500 699"/><path fill="#263a3a" d="M33 693l14-5v5z"/>
        <g font-family="Noto Sans, sans-serif" font-size="9"><text x="29" y="649" fill="#262e4e">Z</text><text x="46" y="683" fill="#25332f">Y</text><text x="71" y="694" fill="#3b2530">X</text></g>
        <path stroke="#3f313c" stroke-width="2.400" d="M1207.500 683.500H1281"/><path stroke="#2b3751" stroke-width="2.300" d="M1240.500 650V716"/>
        <path fill="none" stroke="#38283a" stroke-width="1" d="M1202 678h-3.500v11h3.500M1280.500 678h3.500v11h-3.500"/><path fill="none" stroke="#242c4a" stroke-width="1.300" d="M1237 638v9M1243.500 638v9"/>
      </svg>
      <div class="leed"><strong>Estandarizar</strong><small>LEED</small></div>
      <div class="command">
        <i class="grip"></i><svg class="cx" viewBox="0 0 12 12"><path d="M1.500 1l9 10M10.500 1l-9 10"/></svg><svg class="ic"><use href="#wrench"/></svg>
        <div class="input"><svg class="term"><use href="#term"/></svg><i class="dd dark"></i><span>Type a command</span><i class="dd upw"></i></div>
      </div>
    </div>
    <aside class="side">
      <section class="avisos">
        <h2>Avisos</h2>
        <ul>
          <li class="ok"><b></b><div>Barra 1 y 2<br>-&gt; +0.5m<small>Conseguir materiales</small></div></li>
          <li><b></b><div>Barra 7<br>-&gt; +1m<small>Conseguir materiales</small></div></li>
          <li class="ok"><b></b><div>Fibra de<br>vidrio<small>Conseguir materiales</small></div></li>
          <li><b></b><div>Agregar<br>ventana<br>-&gt; +3m Sur<small>Conseguir materiales</small></div></li>
        </ul>
        <i class="thumb"></i>
      </section>
      <section class="printing"><button>Imprimir 3D</button></section>
    </aside>
  </main>

  <nav class="layouts"><span class="act">Model</span><span>Layout1</span><span>Layout2</span><span class="add">+</span></nav>

  <div class="status">
    <span>MODEL</span>
    <div class="on"><svg class="ic"><use href="#sgrid"/></svg></div><svg class="ic"><use href="#sdots"/></svg><i class="dd"></i>
    <div class="on"><svg class="ic"><use href="#sortho"/></svg></div><svg class="ic"><use href="#spolar"/></svg><i class="dd"></i><svg class="ic"><use href="#siso"/></svg><i class="dd"></i>
    <div class="on"><svg class="ic"><use href="#sangle"/></svg></div><div class="on"><svg class="ic"><use href="#ssnap"/></svg></div><i class="dd"></i>
    <div class="on"><svg class="ic"><use href="#sann"/></svg></div><svg class="ic"><use href="#sann2"/></svg><svg class="ic"><use href="#sann3"/></svg><span>1:1</span><i class="dd"></i>
    <svg class="ic"><use href="#gear"/></svg><i class="dd"></i><svg class="ic"><use href="#splus"/></svg><svg class="ic obj"><use href="#sobj"/></svg><svg class="ic"><use href="#sfull"/></svg><svg class="ic"><use href="#smenu"/></svg>
  </div>

  <footer class="taskbar">
    <svg class="win"><use href="#win"/></svg>
    <div class="search"><svg class="ic"><use href="#search"/></svg><span>Escribe aquí para buscar</span></div>
    <svg class="ic"><use href="#cortana"/></svg><svg class="ic"><use href="#taskview"/></svg>
    <svg class="app-ic"><use href="#folder"/></svg><svg class="app-ic"><use href="#slack"/></svg><svg class="app-ic"><use href="#messenger"/></svg>
    <div class="run"><svg class="app-ic"><use href="#opera"/></svg></div>
    <svg class="app-ic"><use href="#vstudio"/></svg><svg class="app-ic"><use href="#outlook"/></svg><svg class="app-ic"><use href="#onenote"/></svg><svg class="app-ic"><use href="#word"/></svg><svg class="app-ic"><use href="#excel"/></svg><svg class="app-ic"><use href="#ppt"/></svg><svg class="app-ic"><use href="#project"/></svg><svg class="app-ic"><use href="#redapp"/></svg>
    <div class="run front"><svg class="app-ic"><use href="#acad"/></svg></div>
    <svg class="app-ic"><use href="#sw"/></svg>
    <div class="run"><svg class="app-ic"><use href="#spotify"/></svg></div>
    <i></i>
    <svg class="t-up"><use href="#up"/></svg><svg class="t-batt"><use href="#batt"/></svg><svg class="t-wifi"><use href="#wifi"/></svg><svg class="t-vol"><use href="#vol"/></svg><span class="lang">ESP</span>
    <div class="clock"><span>07:38 p. m.</span><span>07/03/2020</span></div>
    <svg class="t-not"><use href="#notif"/></svg>
  </footer>
</div>

<i class="edge left-edge"></i><i class="edge right-edge"></i>

<section class="modal">
  <header>
    <h1>Desperdicios</h1>
    <svg class="ctl" viewBox="0 0 44 12"><path d="M0 9.700h10.500" stroke="#c4cad4" stroke-width=".7"/><path d="M15 9.700h9.500V1" stroke="#c4cad4" stroke-width=".7" fill="none"/><path d="M15 0h9.800v2.300H15z" fill="#fff"/><path d="M32.200.500l9.600 10.500M41.800.500L32.200 11" stroke="#fff" stroke-width="1"/></svg>
  </header>
  <div class="row head"><span>Material</span><span>Peso</span><span>Reemplazo</span></div>
  <div class="row r1"><span>Concreto-base</span><span>450kg</span><div class="opt ok"><b><svg viewBox="0 0 20 18"><path d="M2.500 12l5 4.300L19.500.800"/></svg></b><a>Concreto reciclado</a></div></div>
  <div class="row r2"><span>Azulejo-baños</span><span>100kg</span><div class="opt ok"><b><svg viewBox="0 0 20 18"><path d="M2.500 12l5 4.300L19.500.800"/></svg></b><a>Azulejo ecológico</a></div></div>
  <div class="row r3"><span>Acero-vigas</span><span>750kg</span><div class="opt"><b></b><a>Vigas de bambú</a></div></div>
  <i class="thumb"></i>
</section>
</body>
</html>
```
FILE: styles.css
```css
/* 1rem is 1/156.8 of the window's width */
html { font-size: 0.6377551vw; }
* { box-sizing: border-box; margin: 0; padding: 0; }
body { width: 100vw; height: 100vh; overflow: hidden; position: relative; background: #232731; color: #484b56; font-family: "Noto Sans", "Open Sans", sans-serif; font-size: 1.16rem; line-height: 1.5rem; white-space: nowrap; }
i { font-style: normal; display: block; }
ul { list-style: none; }
svg { display: block; overflow: visible; }
.sprite { position: absolute; width: 0; height: 0; }

/* icon paints */
.g { fill: #4a4d58; }
.d { fill: #363944; }
.k { fill: #272b36; }
.b { fill: #324d63; }
.r { fill: #50303b; }
.y { fill: #5a5540; }
.gr { fill: #2c5444; }
.ln { fill: none; stroke: #434651; stroke-width: 1; }
.ln2 { fill: none; stroke: #474a55; stroke-width: 1.3; }
.lb { fill: none; stroke: #33475f; stroke-width: 1; }
.wide { stroke-width: 1.8; }

.ic { width: 1.6rem; height: 1.6rem; flex: none; }
.dd { width: 0; height: 0; border: .38rem solid transparent; border-top: .48rem solid #484b56; border-bottom: 0; flex: none; }
.dd.sm { border-width: .26rem; border-top-width: .34rem; border-bottom: 0; }
.dd.dim { border-top-color: #343843; }
.dlg { width: .6rem; height: .6rem; }

.app { display: flex; flex-direction: column; height: 100%; }

.titlebar { height: 2.6rem; display: grid; align-items: center; justify-items: center; color: #4c4f5a;
  grid-template-columns: 5.3rem 2.4rem 2.4rem 2.5rem 2.3rem 2.6rem 2.4rem 2.4rem 2.5rem 1rem 2.6rem 1.2rem .5rem 17.9rem 1.6rem 6.9rem 26.3rem 14rem 2rem 18.2rem 2.4rem 2.5rem 8.3rem 1.6rem 2.5rem 2.4rem .8rem 1.5rem 2.4rem 1.2rem 6.2rem 2.6rem 2.5rem 2.5rem; }
.left { justify-self: start; }
.caption { font-size: 1.183rem; }
.workspace { width: 100%; height: 2.2rem; background: #272b36; display: flex; align-items: center; padding: 0 .2rem 0 .1rem; }
.workspace span { flex: 1; margin-left: .2rem; }
.workspace .dd { margin-right: .2rem; }
.over { position: relative; }
.over::before { content: ""; position: absolute; left: -.38rem; top: -.9rem; width: .76rem; height: .15rem; background: #484b56; }
.play { width: .5rem; height: .9rem; }
.find { width: 100%; height: 2.2rem; line-height: 2.2rem; background: #272b36; padding-left: .25rem; font-style: italic; font-size: 1.1rem; color: #3e424d; }
.who { margin-left: .2rem; }
.sep { width: .1rem; height: 2rem; background: #2d313c; }
.wmin { width: .9rem; height: .25rem; background: #4a4d58; margin-top: .5rem; }
.wmax { width: 1.3rem; height: 1.15rem; border: .1rem solid #4a4d58; }
.wx { width: 1.1rem; height: 1.1rem; }
.wx path, .cx path { stroke: #50535e; stroke-width: 1.2; }

.tabs { height: 1.9rem; display: grid; align-items: center; color: #414550; line-height: 2.1rem;
  grid-template-columns: 11.96rem 4.7rem 6.1rem 4.8rem 6.75rem 7.7rem 4.9rem 7rem 4.55rem 6.35rem 5.7rem 6.25rem 8.35rem 9.07rem 11.1rem 2rem 1rem; }
.home { margin-left: 5.2rem; width: 5.7rem; height: 1.9rem; background: #272c37; padding-left: 1.1rem; color: #464a55; }
.rec { width: 1.4rem; height: .9rem; }

.ribbon { height: 10rem; margin-left: 1rem; display: flex; background: #272c37; width: 154.7rem; }
.panel { border-right: .15rem solid #242832; display: flex; flex-direction: column; padding-top: .5rem; }
.tools { height: 7.5rem; display: grid; grid-template-rows: repeat(3, 2.5rem); align-items: center; justify-items: center; justify-content: start; }
.name { height: 2rem; padding-top: .4rem; display: flex; align-items: center; }
.name .dd { margin-left: .6rem; }
.name .dlg { margin-left: auto; margin-right: .3rem; }
.big { grid-row: 1 / 4; height: 7.5rem; width: 100%; padding-top: .25rem; display: flex; flex-direction: column; align-items: center; }
.big > svg { width: 3.2rem; height: 3.2rem; margin-bottom: .6rem; flex: none; }
.big .dd { margin-top: .3rem; }
.c1 { grid-column: 1; } .c2 { grid-column: 2; } .c3 { grid-column: 3; }
.combo { background: #2a303c; height: 2rem; display: flex; align-items: center; padding: 0 .3rem; }
.combo span { flex: 1; margin-left: .4rem; }

.modeling { width: 18.7rem; } .modeling .tools { grid-template-columns: 4.2rem 6.4rem 2.55rem 5.5rem; } .modeling .name { padding-left: 5.9rem; }
.mesh { width: 8.2rem; } .mesh .tools { grid-template-columns: 5.4rem 1.8rem; } .mesh .name { padding-left: 2rem; }
.solid { width: 9.5rem; } .solid .tools { grid-template-columns: 2.4rem 3.2rem 2.2rem 1.6rem; } .solid .name { padding-left: .4rem; }
.solid .name .dd, .draw .name .dd { margin-left: .5rem; }
.draw { width: 9.4rem; } .draw .tools { grid-template-columns: 2.6rem 2.4rem 3.2rem .6rem; } .draw .name { padding-left: 2.6rem; }
.modify { width: 14.8rem; } .modify .tools { grid-template-columns: 2.8rem 2.8rem 2.2rem 3.6rem 1.3rem 2.4rem; } .modify .name { padding-left: 4.9rem; }
.sect { width: 7.8rem; } .sect .tools { grid-template-columns: 7.8rem; } .sect .name { padding-left: .5rem; }
.coord { width: 14.7rem; } .coord .tools { grid-template-columns: 2.8rem .4rem 4.4rem 1.2rem 3.8rem 1.1rem; } .coord .name { padding-left: 3.5rem; }
.world { grid-column: 3 / 7; justify-self: start; margin-left: 1.26rem; width: 9.8rem; padding-left: .15rem; }
.world span { margin-left: .1rem; }
.view { width: 13.2rem; } .view .tools { grid-template-columns: 12.2rem; margin-left: .3rem; } .view .combo { width: 100%; } .view .combo span { margin-left: .2rem; } .view .name { padding-left: 4.6rem; }
.vp { width: 100%; display: flex; align-items: center; gap: .6rem; padding-left: .2rem; }
.select { width: 17.4rem; } .select .tools { grid-template-columns: 4.5rem 6.9rem 5.6rem .3rem; } .select .name { padding-left: 6.1rem; }
.select .on { background: #263747; border: .1rem solid #2f4557; width: 4.35rem; padding-top: .15rem; height: 7.4rem; }
.c4 { grid-row: 3; margin-top: -1.4rem; margin-left: -.6rem; }
.layer { width: 27.7rem; } .layer .tools { grid-template-columns: 6.2rem 2.4rem 2.4rem 2.4rem 2.8rem 2rem 9.4rem; } .layer .name { padding-left: 11.5rem; }
.layer .tools > .ic:nth-child(8) { grid-column: 2; }
.layer .tools > .ic:nth-child(3) { grid-column: 2; }
.cur { grid-column: 2 / 8; width: 20.8rem; justify-self: start; margin-left: .3rem; }
.cur .ic { height: 1.5rem; width: 1.3rem; margin-right: .7rem; }
.cur b { width: 1.3rem; height: 1.25rem; background: #50525c; }
.cur span { margin-left: .5rem; }
.groups { width: 6.9rem; } .groups .tools { grid-template-columns: 4.3rem 2.3rem; } .groups .name { padding-left: .9rem; }
.groups .big > svg { margin-bottom: .5rem; }
.toggle { width: 2.4rem; height: 2.3rem; border: .1rem solid #2f4453; background: #26323e; display: grid; place-items: center; }
.baseview { width: 6.4rem; border-right: 0; } .baseview .tools { grid-template-columns: 6.6rem; } .baseview .name { padding-left: .6rem; }
.baseview .big > svg { height: 2.5rem; margin: .4rem 0 .9rem; }

.docs { height: 2.8rem; margin: .4rem 0 0 3.1rem; display: flex; line-height: 2.7rem; color: #424651; }
.start { width: 12.6rem; background: #252934; padding-left: .8rem; }
.drawing { width: 11.8rem; background: #262b36; padding-left: .9rem; }

.work { height: 60.7rem; display: flex; background: #232631; }
.canvas { flex: 1; position: relative; }
.scene { position: absolute; inset: 0; width: 135.27rem; height: 60.7rem; }
.viewlabel { padding: .45rem 0 0 .9rem; color: #464a55; font-size: 1.168rem; }
.leed { position: absolute; left: 2.07rem; top: 53.5rem; width: 18.55rem; height: 5.8rem; background: #272c37; display: flex; flex-direction: column; align-items: center; font-family: "DejaVu Sans Mono", monospace; color: #474a55; }
.leed strong { font-weight: 400; font-size: 2.02rem; line-height: 2.4rem; margin: 1.6rem .3rem 0 0; letter-spacing: .03rem; }
.leed small { font-size: .95rem; line-height: 1rem; color: #383c47; margin-right: 1.3rem; margin-top: -.05rem; }
.command { position: absolute; left: 32.3rem; top: 58rem; height: 2.6rem; width: 92.7rem; display: flex; align-items: center; }
.grip { width: .4rem; height: 1.8rem; background: radial-gradient(circle, #454853 35%, transparent 40%) 0 0 / .2rem .3rem; }
.cx { width: 1rem; height: 1.1rem; margin: 0 1.2rem 0 .6rem; }
.cx path { stroke-width: 1.8; }
.input { flex: 1; margin-left: .4rem; height: 2.6rem; background: #42454f; display: flex; align-items: center; border-radius: .15rem; padding: 0 .5rem; font: italic 1.22rem/1.5rem "DejaVu Sans Mono", monospace; color: #31343e; }
.term { width: 1.6rem; height: 1.4rem; }
.input span { flex: 1; margin-left: .85rem; }
.dd.dark { border-top-color: #2a2d37; border-left-width: .3rem; border-right-width: .3rem; margin-left: .2rem; }
.dd.upw { border-top: 0; border-bottom: .5rem solid #2a2d37; }

.side { width: 20.55rem; margin-right: .98rem; font-family: "DejaVu Sans Mono", monospace; display: flex; flex-direction: column; justify-content: space-between; color: #464954; }
.avisos { height: 45.9rem; background: #272c37; padding: 1.3rem 0 0 1.7rem; position: relative; }
.avisos h2 { font-weight: 400; font-size: 2.56rem; line-height: 2.8rem; letter-spacing: .06rem; color: #4a4d58; margin-bottom: 1.2rem; }
.avisos li { height: 10rem; display: flex; font-size: 2rem; line-height: 2.5rem; letter-spacing: .045rem; }
.avisos b { width: 1.2rem; height: 1.1rem; background: #484a55; margin: .6rem 1rem 0 0; }
.avisos .ok b::before { content: ""; display: block; width: .95rem; height: .35rem; border: solid #272b35; border-width: 0 0 .13rem .13rem; transform: translate(.25rem, .15rem) rotate(-45deg); }
.avisos small { display: block; font-size: 1rem; line-height: .9rem; letter-spacing: 0; color: #383c47; margin-top: -.1rem; }
.avisos .thumb { position: absolute; right: -.3rem; top: 1.6rem; width: .7rem; height: 5rem; background: #2f323d; border-radius: .2rem; }
.printing { height: 6.4rem; background: #262b36; padding: .5rem .15rem .4rem .45rem; }
.printing button { width: 100%; height: 5.45rem; padding-left: .5rem; border: 0; border-radius: .8rem; background: #222530; color: #484b56; font: 2rem/2.4rem "DejaVu Sans Mono", monospace; letter-spacing: .045rem; }

.layouts { height: 2.2rem; display: flex; padding-left: 2.3rem; border-top: .1rem solid #272b35; line-height: 1.75rem; color: #3d414c; }
.layouts span { background: #252934; height: 1.95rem; margin-right: .5rem; border-radius: 0 0 .5rem .5rem; text-align: center; width: 6.2rem; }
.layouts .act { background: #272b36; font-weight: 700; color: #50535e; width: 5rem; margin-right: .6rem; }
.layouts .add { width: 2.8rem; font-size: 1.4rem; }

.status { height: 2.65rem; padding-bottom: .3rem; border-bottom: .15rem solid #282c37; align-items: center; display: grid; justify-items: center; color: #484b56;
  grid-template-columns: 4.4rem 3.3rem 1.6rem 2.4rem 2.2rem 2.6rem 1.5rem 2.5rem 1.4rem 2.6rem 2.4rem 1.6rem 3rem 1.8rem 3rem 1.8rem 1.2rem 3.2rem .9rem 3rem 2.5rem 4.1rem .8rem;
  margin-left: 101.5rem; background: #262a35; margin-right: 1.1rem; }
.status > .on { background: #293b50; width: 2.3rem; height: 2.3rem; display: grid; place-items: center; }

.taskbar { flex: none; height: 4.55rem; display: grid; align-items: center; justify-items: center; background: #242832; border-bottom: .15rem solid #1f2230;
  grid-template-columns: 5.2rem 35.1rem 4.5rem 5.4rem 5rem 5rem 5.2rem 5rem 5.1rem 5rem 5rem 5.1rem 4.9rem 5.4rem 4.6rem 5.4rem 4.9rem 5.3rem 4.8rem 4.4rem 2.8rem 2rem 3rem 1.6rem 4.6rem 6.6rem 5.2rem; grid-template-rows: 100%; }
.win { width: 1.8rem; height: 1.8rem; }
.search { width: 100%; height: 4.4rem; background: #262a35; border: .1rem solid #292d37; display: flex; align-items: center; padding-left: 1.1rem; font-size: 1.48rem; color: #464a55; }
.search span { margin-left: 1.05rem; }
.taskbar > svg { position: relative; top: .15rem; }
.taskbar > .ic { width: 1.7rem; height: 1.8rem; }
.app-ic { width: 2.3rem; height: 2.4rem; }
.run { width: 4.2rem; height: 4.4rem; display: grid; place-items: center; border-bottom: .25rem solid #3b4c59; padding-top: .5rem; }
.front { width: 4.8rem; background: #2f323d; }
.t-up { width: 1.2rem; height: .7rem; } .t-batt { width: 1.5rem; height: 1rem; } .t-wifi { width: 1.2rem; height: 1.4rem; } .t-vol { width: 1.8rem; height: 1.4rem; } .t-not { width: 1.7rem; height: 1.8rem; }
.lang { font-size: 1.08rem; padding-top: .2rem; }
.clock { display: flex; flex-direction: column; align-items: center; line-height: 1.9rem; padding-top: .1rem; }

.edge { position: absolute; }
.left-edge { left: 0; top: 0; width: .15rem; height: 100%; background: #424753; }
.right-edge { right: 0; top: 0; width: .15rem; height: 100%; background: linear-gradient(#08090c 9.8rem, #8d9097 9.8rem 82.8rem, #08090c 82.8rem); }

.modal { position: absolute; left: 23.5rem; top: 15.36rem; width: 108.27rem; height: 29.35rem; border: .1rem solid #8189a0; background: #3b434f; color: #fff; font-family: "DejaVu Sans Mono", monospace; font-size: 2.52rem; letter-spacing: .045rem; }
.modal header { height: 10.45rem; display: flex; justify-content: space-between; }
.modal h1 { font-weight: 400; font-size: 4.75rem; line-height: 6rem; letter-spacing: .02rem; padding: 2.5rem 0 0 3.35rem; }
.ctl { width: 4.4rem; height: 1.2rem; margin: 1.2rem 1.75rem 0 0; }
.row { display: grid; grid-template-columns: 37.35rem 31.9rem 1fr; padding-left: 3.2rem; }
.head { height: 4.57rem; background: #232631; line-height: 4.65rem; }
.head span:last-child { padding-left: 2.7rem; }
.r1 { height: 4.5rem; line-height: 4.25rem; }
.r2 { height: 4.65rem; line-height: 4.65rem; background: #232631; }
.r3 { line-height: 4.55rem; }
.opt { display: flex; position: relative; }
.opt b { width: 1.7rem; height: 1.65rem; background: #b4b4b5; margin: 1.4rem .9rem 0 .1rem; flex: none; }
.r1 .opt b, .r3 .opt b { margin-top: 1.35rem; }
.opt b svg { width: 2rem; height: 1.8rem; margin: -.45rem 0 0 .1rem; }
.opt path { stroke: #050505; stroke-width: 1.6; fill: none; }
.opt a { letter-spacing: .055rem; text-decoration: underline; text-decoration-thickness: .1rem; text-underline-offset: .2rem; text-decoration-skip-ink: none; }
.modal .thumb { position: absolute; right: .6rem; top: 10.6rem; width: .48rem; height: 5.1rem; background: #696a6c; border-radius: .2rem; }
```
